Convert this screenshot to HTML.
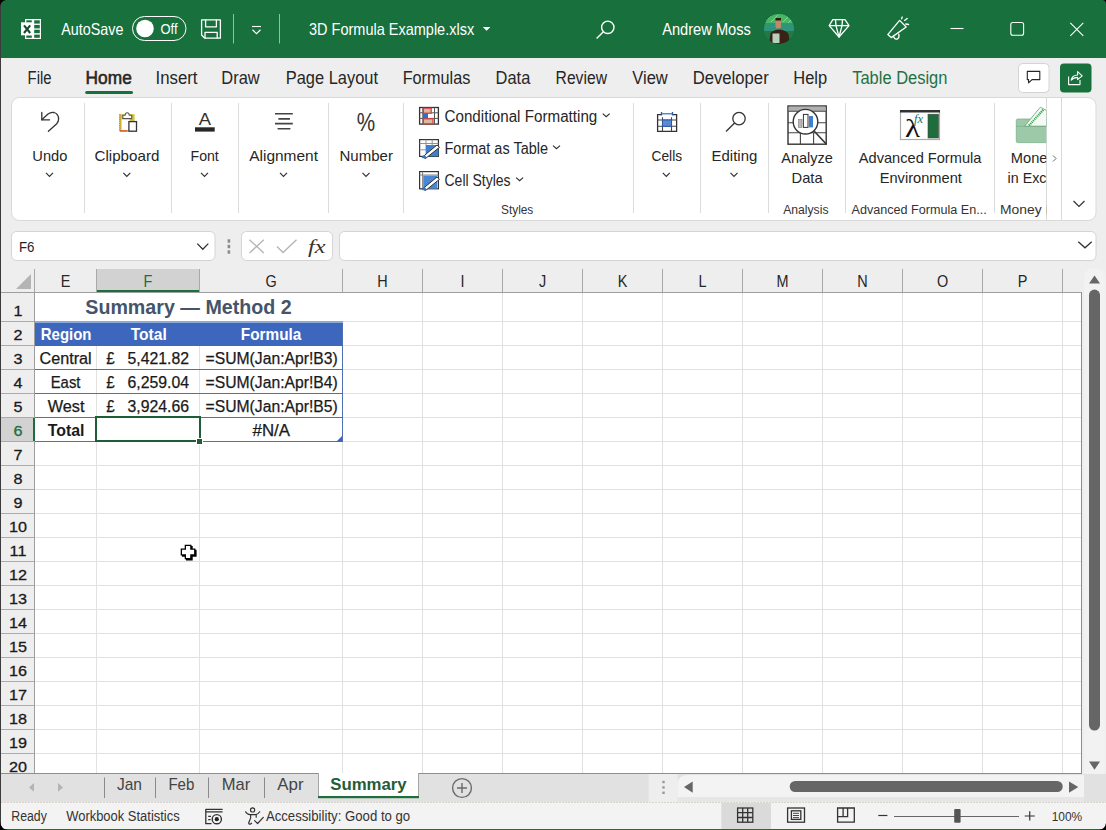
<!DOCTYPE html>
<html><head><meta charset="utf-8"><style>
html,body{margin:0;padding:0;width:1106px;height:830px;overflow:hidden;background:#eeeeee}
svg{display:block;font-family:"Liberation Sans",sans-serif}
</style></head><body>
<svg width="1106" height="830" viewBox="0 0 1106 830">
<rect x="0" y="0" width="1106" height="830" fill="#eeeeee"/>
<rect x="0" y="0" width="1106" height="58" fill="#18703d"/>
<rect x="25" y="19" width="16" height="20" fill="#fff"/>
<rect x="26.3" y="20.3" width="5.5" height="2.7" fill="#18703d"/>
<rect x="34.2" y="20.3" width="5.6" height="3.3" fill="#18703d"/>
<rect x="34.2" y="24.9" width="5.6" height="3.5" fill="#18703d"/>
<rect x="34.2" y="29.7" width="5.6" height="3.5" fill="#18703d"/>
<rect x="26.3" y="35.3" width="5.5" height="2.5" fill="#18703d"/>
<rect x="34.2" y="34.6" width="5.6" height="3.2" fill="#18703d"/>
<rect x="21" y="22.3" width="12" height="13" fill="#fff"/>
<path d="M24 25.3 L30.2 33 M30.2 25.3 L24 33" stroke="#1a4a30" stroke-width="2.1"/>
<text x="61.30" y="35.30" font-size="16.28" fill="#ffffff" textLength="62.11" lengthAdjust="spacingAndGlyphs">AutoSave</text>
<rect x="132.5" y="16.5" width="53.5" height="24" rx="12" fill="none" stroke="#fff" stroke-width="1"/>
<circle cx="145" cy="28.5" r="8.8" fill="#fff"/>
<text x="160.60" y="33.60" font-size="14.24" fill="#ffffff" textLength="16.97" lengthAdjust="spacingAndGlyphs">Off</text>
<g fill="none" stroke="#fff" stroke-width="1.3" stroke-linejoin="round"><path d="M201.6 19.8 H220.4 V38.2 H204.8 L201.6 35 Z"/><path d="M205.6 19.8 V26.8 H216.4 V19.8"/><path d="M205 38.2 V32.4 H217.2 V38.2"/></g>
<path d="M233.5 14 V43.5 M279.5 14 V43.5" stroke="#fff" stroke-opacity="0.55" stroke-width="1"/>
<path d="M252 26.5 H261" stroke="#fff" stroke-width="1.1"/><path d="M252.5 29.8 L256.5 33.6 L260.5 29.8" fill="none" stroke="#fff" stroke-width="1.2"/>
<text x="309.00" y="35.30" font-size="16.28" fill="#ffffff" textLength="165.20" lengthAdjust="spacingAndGlyphs">3D Formula Example.xlsx</text>
<path d="M482.8 27 H490.4 L486.6 30.8 Z" fill="#fff"/>
<g fill="none" stroke="#fff" stroke-width="1.4"><circle cx="607.8" cy="27.3" r="6.2"/><path d="M603.4 31.8 L596.6 38.4"/></g>
<text x="662.20" y="35.30" font-size="16.28" fill="#ffffff" textLength="88.69" lengthAdjust="spacingAndGlyphs">Andrew Moss</text>
<defs><clipPath id="av"><circle cx="779" cy="29" r="15"/></clipPath></defs>
<g clip-path="url(#av)"><rect x="764" y="14" width="30" height="30" fill="#1f7a45"/><rect x="764" y="14" width="30" height="9" fill="#45b865"/><path d="M766 21 L772 15 M771 22 L778 15 M783 22 L789 16 M788 23 L794 17" stroke="#7fd890" stroke-width="1"/><rect x="764" y="23" width="30" height="8" fill="#2f957a"/><path d="M769 44 L770.5 33 Q774 29.5 779.5 29.5 Q786 30 788.5 34 L790 44Z" fill="#3a2216"/><rect x="775.5" y="18.5" width="5.5" height="10" rx="2" fill="#c08a6a"/><rect x="775.5" y="18" width="5.5" height="2.5" fill="#2a1a10"/><rect x="772.5" y="33.5" width="7" height="9.5" fill="#b8d0bc"/></g>
<g fill="none" stroke="#fff" stroke-width="1.3" stroke-linejoin="round"><path d="M832.8 19.6 H845 L849 25.6 L839 37 L829.2 25.6 Z"/><path d="M829.2 25.6 H849 M835.5 19.6 L836 25.6 L839 37 L842 25.6 L842.5 19.6"/></g>
<g fill="none" stroke="#fff" stroke-width="1.3" stroke-linejoin="round" stroke-linecap="round"><path d="M887.8 34.6 L899.6 20.4 L906.2 27 L891.2 37.6 Z"/><path d="M893.6 36.6 Q894.5 39.8 897.5 39 Q899.6 37.8 898.8 34.2"/><path d="M901.6 18.8 L902.2 17 M904.6 20.4 L907.2 18.4 M905.8 24 L908.6 24.5"/></g>
<path d="M950.5 28.5 H963.5" stroke="#fff" stroke-width="1.1"/>
<rect x="1010.8" y="22.5" width="12.8" height="12.8" rx="2" fill="none" stroke="#fff" stroke-width="1.1"/>
<path d="M1070.3 22.8 L1083.3 35.8 M1083.3 22.8 L1070.3 35.8" stroke="#fff" stroke-width="1.1"/>
<text x="27.60" y="83.70" font-size="17.44" fill="#262626" textLength="23.91" lengthAdjust="spacingAndGlyphs">File</text>
<text x="85.60" y="83.70" font-size="17.44" fill="#262626" stroke="#262626" stroke-width="0.55" textLength="46.19" lengthAdjust="spacingAndGlyphs">Home</text>
<text x="155.50" y="83.70" font-size="17.44" fill="#262626" textLength="42.00" lengthAdjust="spacingAndGlyphs">Insert</text>
<text x="221.30" y="83.70" font-size="17.44" fill="#262626" textLength="38.36" lengthAdjust="spacingAndGlyphs">Draw</text>
<text x="285.70" y="83.70" font-size="17.44" fill="#262626" textLength="92.30" lengthAdjust="spacingAndGlyphs">Page Layout</text>
<text x="402.70" y="83.70" font-size="17.44" fill="#262626" textLength="67.59" lengthAdjust="spacingAndGlyphs">Formulas</text>
<text x="495.60" y="83.70" font-size="17.44" fill="#262626" textLength="34.69" lengthAdjust="spacingAndGlyphs">Data</text>
<text x="555.60" y="83.70" font-size="17.44" fill="#262626" textLength="51.35" lengthAdjust="spacingAndGlyphs">Review</text>
<text x="632.30" y="83.70" font-size="17.44" fill="#262626" textLength="35.46" lengthAdjust="spacingAndGlyphs">View</text>
<text x="692.70" y="83.70" font-size="17.44" fill="#262626" textLength="76.00" lengthAdjust="spacingAndGlyphs">Developer</text>
<text x="793.30" y="83.70" font-size="17.44" fill="#262626" textLength="33.89" lengthAdjust="spacingAndGlyphs">Help</text>
<text x="852.20" y="83.70" font-size="17.44" fill="#1e7145" textLength="95.20" lengthAdjust="spacingAndGlyphs">Table Design</text>
<rect x="85.2" y="91" width="47.8" height="3" rx="1.5" fill="#18703d"/>
<rect x="1018.5" y="63.5" width="30.5" height="29" rx="4" fill="#fff" stroke="#d4d4d4"/>
<path d="M1027.3 71.4 H1039.8 V79.6 H1032 L1028.6 82.8 V79.6 H1027.3 Z" fill="none" stroke="#242424" stroke-width="1.1" stroke-linejoin="round"/>
<rect x="1060" y="63.5" width="31.5" height="29" rx="4" fill="#18703d"/>
<g fill="none" stroke="#fff" stroke-width="1.1" stroke-linejoin="round"><path d="M1068.6 76.5 V84.6 H1080 V80"/><path d="M1071.2 80.2 Q1072 75.2 1077.6 75 V71.6 L1082.2 75.8 L1077.6 79.6 V77.4 Q1073.4 77.4 1071.2 80.2Z"/></g>
<rect x="11.5" y="97.5" width="1084.5" height="123" rx="8" fill="#fff" stroke="#d9d9d9"/>
<path d="M84.5 103 V213" stroke="#dcdcdc"/>
<path d="M171.5 103 V213" stroke="#dcdcdc"/>
<path d="M238.5 103 V213" stroke="#dcdcdc"/>
<path d="M328.5 103 V213" stroke="#dcdcdc"/>
<path d="M403.5 103 V213" stroke="#dcdcdc"/>
<path d="M633.5 103 V213" stroke="#dcdcdc"/>
<path d="M700.5 103 V213" stroke="#dcdcdc"/>
<path d="M768.5 103 V213" stroke="#dcdcdc"/>
<path d="M845.5 103 V213" stroke="#dcdcdc"/>
<path d="M994.5 103 V213" stroke="#dcdcdc"/>
<path d="M1046.5 97.5 V220.5 M1061.5 97.5 V220.5" stroke="#d9d9d9"/>
<path d="M1053 155.5 L1056 158.5 L1053 161.5" fill="none" stroke="#666" stroke-width="1"/>
<path d="M1073.5 201 L1079 206.5 L1084.5 201" fill="none" stroke="#333" stroke-width="1.2"/>
<text x="32.30" y="161.00" font-size="15.41" fill="#262626" textLength="35.09" lengthAdjust="spacingAndGlyphs">Undo</text>
<text x="94.50" y="161.00" font-size="15.41" fill="#262626" textLength="64.90" lengthAdjust="spacingAndGlyphs">Clipboard</text>
<text x="190.50" y="161.00" font-size="15.41" fill="#262626" textLength="28.30" lengthAdjust="spacingAndGlyphs">Font</text>
<text x="249.20" y="161.00" font-size="15.41" fill="#262626" textLength="68.80" lengthAdjust="spacingAndGlyphs">Alignment</text>
<text x="339.50" y="161.00" font-size="15.41" fill="#262626" textLength="53.40" lengthAdjust="spacingAndGlyphs">Number</text>
<text x="651.50" y="161.00" font-size="15.41" fill="#262626" textLength="30.60" lengthAdjust="spacingAndGlyphs">Cells</text>
<text x="711.60" y="161.00" font-size="15.41" fill="#262626" textLength="45.69" lengthAdjust="spacingAndGlyphs">Editing</text>
<path d="M46.0 172.8 L49.5 176.4 L53.0 172.8" fill="none" stroke="#333" stroke-width="1.2"/>
<path d="M123.3 172.8 L126.8 176.4 L130.3 172.8" fill="none" stroke="#333" stroke-width="1.2"/>
<path d="M201.0 172.8 L204.5 176.4 L208.0 172.8" fill="none" stroke="#333" stroke-width="1.2"/>
<path d="M280.0 172.8 L283.5 176.4 L287.0 172.8" fill="none" stroke="#333" stroke-width="1.2"/>
<path d="M362.5 172.8 L366 176.4 L369.5 172.8" fill="none" stroke="#333" stroke-width="1.2"/>
<path d="M662.8 172.8 L666.3 176.4 L669.8 172.8" fill="none" stroke="#333" stroke-width="1.2"/>
<path d="M730.5 172.8 L734 176.4 L737.5 172.8" fill="none" stroke="#333" stroke-width="1.2"/>
<text x="781.20" y="162.70" font-size="15.41" fill="#262626" textLength="51.69" lengthAdjust="spacingAndGlyphs">Analyze</text>
<text x="791.50" y="182.60" font-size="15.41" fill="#262626" textLength="31.09" lengthAdjust="spacingAndGlyphs">Data</text>
<text x="858.80" y="163.00" font-size="15.41" fill="#262626" textLength="122.59" lengthAdjust="spacingAndGlyphs">Advanced Formula</text>
<text x="879.70" y="183.00" font-size="15.41" fill="#262626" textLength="82.20" lengthAdjust="spacingAndGlyphs">Environment</text>
<defs><clipPath id="mc"><rect x="995" y="97" width="51.3" height="124"/></clipPath></defs>
<g clip-path="url(#mc)">
<text x="1010.80" y="163.00" font-size="15.41" fill="#262626" textLength="44.01" lengthAdjust="spacingAndGlyphs">Money</text>
<text x="1007.60" y="183.00" font-size="15.41" fill="#262626" textLength="50.01" lengthAdjust="spacingAndGlyphs">in Excel</text>
<text x="1000.00" y="214.00" font-size="13.08" fill="#333" textLength="94.00" lengthAdjust="spacingAndGlyphs">Money in Excel</text>
<rect x="1016.3" y="119" width="32" height="23.6" rx="1.5" fill="#9ccaa8" stroke="#7fae8a" stroke-width="0.8"/>
<path d="M1024.5 126.3 L1040.3 107.2 L1046.5 110.5 L1046.5 126.3Z" fill="#f4faf4" stroke="#6a9a76" stroke-width="0.8"/>
<path d="M1029 125.5 L1043.5 109.5" stroke="#2ea84a" stroke-width="2.2" stroke-dasharray="1.2 0.8"/>
<path d="M1016.3 126.3 H1048" stroke="#7fae8a" stroke-width="0.8"/>
</g>
<text x="501.00" y="214.00" font-size="13.08" fill="#333" textLength="32.30" lengthAdjust="spacingAndGlyphs">Styles</text>
<text x="783.20" y="214.00" font-size="13.08" fill="#333" textLength="45.30" lengthAdjust="spacingAndGlyphs">Analysis</text>
<text x="851.50" y="214.00" font-size="13.08" fill="#333" textLength="135.19" lengthAdjust="spacingAndGlyphs">Advanced Formula En...</text>
<text x="444.50" y="121.80" font-size="15.84" fill="#262626" textLength="152.79" lengthAdjust="spacingAndGlyphs">Conditional Formatting</text>
<text x="444.50" y="153.60" font-size="15.84" fill="#262626" textLength="103.51" lengthAdjust="spacingAndGlyphs">Format as Table</text>
<text x="444.50" y="185.70" font-size="15.84" fill="#262626" textLength="66.10" lengthAdjust="spacingAndGlyphs">Cell Styles</text>
<path d="M602.7 113.6 L606.2 116.8 L609.7 113.6" fill="none" stroke="#333" stroke-width="1.2"/>
<path d="M553.0 145.6 L556.5 148.79999999999998 L560.0 145.6" fill="none" stroke="#333" stroke-width="1.2"/>
<path d="M516.1 177.6 L519.6 180.79999999999998 L523.1 177.6" fill="none" stroke="#333" stroke-width="1.2"/>
<g fill="none" stroke="#333" stroke-width="1.3" stroke-linejoin="round" stroke-linecap="round"><path d="M41.8 112.4 V119.8 H49.6"/><path d="M41.8 119.8 L48 114 Q51 111.8 54 112.5 Q58.6 114 58.6 119 Q58.6 122 56.5 124 L48.4 131.2"/></g>
<rect x="119.3" y="114.2" width="15.3" height="17.3" fill="#d6c43a"/>
<rect x="121.6" y="118.8" width="8" height="11.2" fill="#fff"/>
<path d="M119.9 114.2 V131.5" stroke="#c84a3a" stroke-width="1" stroke-dasharray="1.2 1"/>
<path d="M120 131 H127.5" stroke="#d83a3a" stroke-width="1.2"/>
<path d="M122.8 118.6 V115.3 H125 Q125.4 112.7 127.2 112.7 Q129 112.7 129.4 115.3 H131.7 V118.6 Z" fill="#fff" stroke="#555" stroke-width="1.1"/>
<rect x="128.9" y="121.6" width="7.6" height="9.6" fill="#fff" stroke="#333" stroke-width="1.3"/>
<text x="198.80" y="125.00" font-size="16.72" fill="#333" textLength="12.30" lengthAdjust="spacingAndGlyphs">A</text>
<rect x="195" y="127.3" width="19.7" height="4.3" fill="#262626"/>
<g stroke="#444" stroke-width="1.6"><path d="M275 113.8 H292.8 M278.4 118.9 H290 M275 123.6 H292.8 M277.6 128.7 H290.4"/></g>
<text x="356.80" y="131.00" font-size="25.44" fill="#333" textLength="18.40" lengthAdjust="spacingAndGlyphs">%</text>
<rect x="419.6" y="107.5" width="18.8" height="16.6" fill="#fff" stroke="#333" stroke-width="1.3"/>
<path d="M422.8 107.5 V124 M434.5 107.5 V124 M419.6 112.8 H438.4 M419.6 118.4 H438.4" stroke="#555" stroke-width="1"/>
<rect x="423.4" y="108.2" width="7.8" height="5" fill="#d8b8a0" stroke="#d83a40" stroke-width="1.2"/>
<rect x="423" y="113.3" width="5" height="4.8" fill="#2f6fc8"/>
<rect x="423.4" y="118.8" width="9.6" height="5" fill="#d8b8a0" stroke="#d83a40" stroke-width="1.2"/>
<rect x="419.6" y="139.6" width="18.8" height="16.8" fill="#fff" stroke="#333" stroke-width="1.2"/>
<path d="M426 139.6 V156.4 M432.2 139.6 V145 M419.6 143.5 H438.4 M419.6 149.8 H426" stroke="#888" stroke-width="0.9"/>
<path d="M426 145 H438.4 V156.4 H426Z" fill="#3f7fd0"/>
<path d="M422.5 157 L437 145 L439.5 147.3 L425.5 158.5Z" fill="#fff" stroke="#333" stroke-width="1"/>
<path d="M421.5 157.8 Q423 155 425 155.5 L427 157.5 Q425 159 421.5 157.8Z" fill="#2a7bd0"/>
<rect x="419.6" y="171.6" width="18.8" height="17.2" fill="#fff" stroke="#333" stroke-width="1.2"/>
<path d="M419.6 175 H438.4 M422.6 171.6 V188.8" stroke="#777" stroke-width="0.9"/>
<rect x="423.2" y="175.6" width="14" height="13" fill="#4a88d6"/>
<path d="M422.5 189 L437 177 L439.5 179.3 L425.5 190.5Z" fill="#fff" stroke="#333" stroke-width="1"/>
<path d="M421.5 189.8 Q423 187 425 187.5 L427 189.5 Q425 191 421.5 189.8Z" fill="#2a7bd0"/>
<path d="M661 114.6 H657.6 V131.3 H676.6 V114.6 H673" fill="#fff" stroke="#333" stroke-width="1.3"/>
<path d="M662.5 117.3 V131.3 M671.5 117.3 V131.3 M657.6 120 H676.6 M657.6 126.3 H676.6" stroke="#444" stroke-width="1.1"/>
<rect x="662.5" y="120" width="9" height="6.3" fill="#5a8ad6" stroke="#2a5aa8" stroke-width="1"/>
<path d="M661.5 113.8 H672.5" stroke="#2a70c8" stroke-width="1.2"/><path d="M661.5 112 V115.6 M672.5 112 V115.6" stroke="#2a5aa8" stroke-width="1.3"/>
<g fill="none" stroke="#333" stroke-width="1.3"><circle cx="739" cy="118.6" r="6.2"/><path d="M734.6 123 L726 131.5"/></g>
<rect x="788" y="106" width="38.2" height="38.2" fill="#fff" stroke="#333" stroke-width="1.4"/>
<rect x="788.7" y="106.7" width="36.8" height="4.4" fill="#b0b0b0"/>
<path d="M788 111.2 H826 M788 122.8 H826 M788 132.8 H826 M800.4 132.8 V144 M813.6 132.8 V144" stroke="#444" stroke-width="1.1"/>
<circle cx="805.5" cy="121.7" r="12.3" fill="#fff" stroke="#333" stroke-width="1.4"/>
<rect x="798.6" y="119.6" width="3.4" height="7.8" fill="#b8b8b8" stroke="#777" stroke-width="0.6"/><rect x="803.4" y="114.4" width="4.6" height="13" fill="#fff" stroke="#333" stroke-width="1"/><rect x="809" y="116" width="4" height="11.4" fill="#3f7fd0"/>
<path d="M814.3 131.3 L826.4 144.2" stroke="#333" stroke-width="1.6"/>
<rect x="900.5" y="111" width="39" height="28.5" fill="#fff" stroke="#aaa" stroke-width="1.2"/>
<rect x="900" y="110" width="40" height="2.5" fill="#333"/>
<rect x="928" y="114.2" width="10.5" height="23.8" fill="#1e6e3c" stroke="#444" stroke-width="0.6"/>
<text x="905" y="136.9" font-family="Liberation Serif" font-size="25" fill="#111" textLength="15.1" lengthAdjust="spacingAndGlyphs">λ</text>
<text x="914" y="123.2" font-family="Liberation Serif" font-style="italic" font-size="11.6" fill="#2e6e5a" textLength="9.2" lengthAdjust="spacingAndGlyphs">fx</text>
<rect x="11.5" y="231.5" width="203.5" height="29" rx="5" fill="#fff" stroke="#d4d4d4"/>
<text x="19.00" y="251.60" font-size="15.41" fill="#262626" textLength="15.50" lengthAdjust="spacingAndGlyphs">F6</text>
<path d="M197.3 243.6 L202.8 249.2 L208.3 243.6" fill="none" stroke="#333" stroke-width="1.3"/>
<rect x="227.6" y="239.3" width="2.6" height="3.4" fill="#8a8a8a"/>
<rect x="227.6" y="244.8" width="2.6" height="3.4" fill="#8a8a8a"/>
<rect x="227.6" y="250.3" width="2.6" height="3.4" fill="#8a8a8a"/>
<rect x="241.5" y="231.5" width="91" height="29" rx="5" fill="#fff" stroke="#d4d4d4"/>
<path d="M249.5 239.8 L263.8 253 M263.8 239.8 L249.5 253" stroke="#b4b4b4" stroke-width="1.3"/>
<path d="M277 246.5 L283 252.5 L296.5 239.8" fill="none" stroke="#b4b4b4" stroke-width="1.3"/>
<text x="308" y="252.5" font-family="Liberation Serif" font-style="italic" font-size="19" fill="#333" textLength="17.5" lengthAdjust="spacingAndGlyphs">fx</text>
<rect x="339.5" y="231.5" width="756.5" height="29" rx="5" fill="#fff" stroke="#d4d4d4"/>
<path d="M1078.3 241.8 L1085 247.8 L1091.7 241.8" fill="none" stroke="#333" stroke-width="1.3"/>
<rect x="1" y="269" width="1081" height="23" fill="#eeeeee"/>
<rect x="1" y="293" width="34" height="480" fill="#eeeeee"/>
<rect x="35" y="293" width="1047" height="480" fill="#fff"/>
<rect x="97" y="269" width="102" height="23" fill="#d2d2d2"/>
<rect x="97" y="290" width="102" height="2" fill="#1e6e3c"/>
<rect x="1" y="418" width="33" height="23" fill="#d2d2d2"/>
<path d="M31 274 V289 H16 Z" fill="#b4b4b4"/>
<path d="M35 345.5 H1082" stroke="#e1e1e1"/>
<path d="M35 369.5 H1082" stroke="#e1e1e1"/>
<path d="M35 393.5 H1082" stroke="#e1e1e1"/>
<path d="M35 417.5 H1082" stroke="#e1e1e1"/>
<path d="M35 441.5 H1082" stroke="#e1e1e1"/>
<path d="M35 465.5 H1082" stroke="#e1e1e1"/>
<path d="M35 489.5 H1082" stroke="#e1e1e1"/>
<path d="M35 513.5 H1082" stroke="#e1e1e1"/>
<path d="M35 537.5 H1082" stroke="#e1e1e1"/>
<path d="M35 561.5 H1082" stroke="#e1e1e1"/>
<path d="M35 585.5 H1082" stroke="#e1e1e1"/>
<path d="M35 609.5 H1082" stroke="#e1e1e1"/>
<path d="M35 633.5 H1082" stroke="#e1e1e1"/>
<path d="M35 657.5 H1082" stroke="#e1e1e1"/>
<path d="M35 681.5 H1082" stroke="#e1e1e1"/>
<path d="M35 705.5 H1082" stroke="#e1e1e1"/>
<path d="M35 729.5 H1082" stroke="#e1e1e1"/>
<path d="M35 753.5 H1082" stroke="#e1e1e1"/>
<path d="M35 321.5 H1082" stroke="#e1e1e1"/>
<path d="M96.5 322 V773" stroke="#e1e1e1"/>
<path d="M199.5 322 V773" stroke="#e1e1e1"/>
<path d="M342.5 322 V773" stroke="#e1e1e1"/>
<path d="M422.5 293 V773" stroke="#e1e1e1"/>
<path d="M502.5 293 V773" stroke="#e1e1e1"/>
<path d="M582.5 293 V773" stroke="#e1e1e1"/>
<path d="M662.5 293 V773" stroke="#e1e1e1"/>
<path d="M742.5 293 V773" stroke="#e1e1e1"/>
<path d="M822.5 293 V773" stroke="#e1e1e1"/>
<path d="M902.5 293 V773" stroke="#e1e1e1"/>
<path d="M982.5 293 V773" stroke="#e1e1e1"/>
<path d="M1062.5 293 V773" stroke="#e1e1e1"/>
<path d="M1 321.5 H34" stroke="#ababab"/>
<path d="M1 345.5 H34" stroke="#ababab"/>
<path d="M1 369.5 H34" stroke="#ababab"/>
<path d="M1 393.5 H34" stroke="#ababab"/>
<path d="M1 417.5 H34" stroke="#ababab"/>
<path d="M1 441.5 H34" stroke="#ababab"/>
<path d="M1 465.5 H34" stroke="#ababab"/>
<path d="M1 489.5 H34" stroke="#ababab"/>
<path d="M1 513.5 H34" stroke="#ababab"/>
<path d="M1 537.5 H34" stroke="#ababab"/>
<path d="M1 561.5 H34" stroke="#ababab"/>
<path d="M1 585.5 H34" stroke="#ababab"/>
<path d="M1 609.5 H34" stroke="#ababab"/>
<path d="M1 633.5 H34" stroke="#ababab"/>
<path d="M1 657.5 H34" stroke="#ababab"/>
<path d="M1 681.5 H34" stroke="#ababab"/>
<path d="M1 705.5 H34" stroke="#ababab"/>
<path d="M1 729.5 H34" stroke="#ababab"/>
<path d="M1 753.5 H34" stroke="#ababab"/>
<path d="M34.5 269 V292" stroke="#a8a8a8"/>
<path d="M96.5 269 V292" stroke="#a8a8a8"/>
<path d="M199.5 269 V292" stroke="#a8a8a8"/>
<path d="M342.5 269 V292" stroke="#a8a8a8"/>
<path d="M422.5 269 V292" stroke="#a8a8a8"/>
<path d="M502.5 269 V292" stroke="#a8a8a8"/>
<path d="M582.5 269 V292" stroke="#a8a8a8"/>
<path d="M662.5 269 V292" stroke="#a8a8a8"/>
<path d="M742.5 269 V292" stroke="#a8a8a8"/>
<path d="M822.5 269 V292" stroke="#a8a8a8"/>
<path d="M902.5 269 V292" stroke="#a8a8a8"/>
<path d="M982.5 269 V292" stroke="#a8a8a8"/>
<path d="M1062.5 269 V292" stroke="#a8a8a8"/>
<path d="M1 292.5 H1082" stroke="#9e9e9e"/>
<path d="M34.5 292 V773" stroke="#9e9e9e"/>
<rect x="33" y="418" width="2" height="23" fill="#1e6e3c"/>
<path d="M1081.5 292 V773.5 M1 773.5 H1082" stroke="#8e8e8e"/>
<text x="60.68" y="286.80" font-size="15.70" fill="#262626" textLength="9.63" lengthAdjust="spacingAndGlyphs">E</text>
<text x="143.59" y="286.80" font-size="15.70" fill="#1e6e3c" textLength="8.82" lengthAdjust="spacingAndGlyphs">F</text>
<text x="265.38" y="286.80" font-size="15.70" fill="#262626" textLength="11.23" lengthAdjust="spacingAndGlyphs">G</text>
<text x="377.29" y="286.80" font-size="15.70" fill="#262626" textLength="10.43" lengthAdjust="spacingAndGlyphs">H</text>
<text x="460.49" y="286.80" font-size="15.70" fill="#262626" textLength="4.01" lengthAdjust="spacingAndGlyphs">I</text>
<text x="538.89" y="286.80" font-size="15.70" fill="#262626" textLength="7.22" lengthAdjust="spacingAndGlyphs">J</text>
<text x="617.68" y="286.80" font-size="15.70" fill="#262626" textLength="9.63" lengthAdjust="spacingAndGlyphs">K</text>
<text x="698.49" y="286.80" font-size="15.70" fill="#262626" textLength="8.03" lengthAdjust="spacingAndGlyphs">L</text>
<text x="776.48" y="286.80" font-size="15.70" fill="#262626" textLength="12.03" lengthAdjust="spacingAndGlyphs">M</text>
<text x="857.29" y="286.80" font-size="15.70" fill="#262626" textLength="10.43" lengthAdjust="spacingAndGlyphs">N</text>
<text x="936.88" y="286.80" font-size="15.70" fill="#262626" textLength="11.23" lengthAdjust="spacingAndGlyphs">O</text>
<text x="1017.68" y="286.80" font-size="15.70" fill="#262626" textLength="9.63" lengthAdjust="spacingAndGlyphs">P</text>
<text x="13.50" y="316.00" font-size="15.41" fill="#1a1a1a" stroke="#1a1a1a" stroke-width="0.3" textLength="9.00" lengthAdjust="spacingAndGlyphs">1</text>
<text x="13.50" y="340.00" font-size="15.41" fill="#1a1a1a" stroke="#1a1a1a" stroke-width="0.3" textLength="9.00" lengthAdjust="spacingAndGlyphs">2</text>
<text x="13.50" y="364.00" font-size="15.41" fill="#1a1a1a" stroke="#1a1a1a" stroke-width="0.3" textLength="9.00" lengthAdjust="spacingAndGlyphs">3</text>
<text x="13.50" y="388.00" font-size="15.41" fill="#1a1a1a" stroke="#1a1a1a" stroke-width="0.3" textLength="9.00" lengthAdjust="spacingAndGlyphs">4</text>
<text x="13.50" y="412.00" font-size="15.41" fill="#1a1a1a" stroke="#1a1a1a" stroke-width="0.3" textLength="9.00" lengthAdjust="spacingAndGlyphs">5</text>
<text x="13.50" y="436.00" font-size="15.41" fill="#1e6e3c" stroke="#1e6e3c" stroke-width="0.3" textLength="9.00" lengthAdjust="spacingAndGlyphs">6</text>
<text x="13.50" y="460.00" font-size="15.41" fill="#1a1a1a" stroke="#1a1a1a" stroke-width="0.3" textLength="9.00" lengthAdjust="spacingAndGlyphs">7</text>
<text x="13.50" y="484.00" font-size="15.41" fill="#1a1a1a" stroke="#1a1a1a" stroke-width="0.3" textLength="9.00" lengthAdjust="spacingAndGlyphs">8</text>
<text x="13.50" y="508.00" font-size="15.41" fill="#1a1a1a" stroke="#1a1a1a" stroke-width="0.3" textLength="9.00" lengthAdjust="spacingAndGlyphs">9</text>
<text x="9.01" y="532.00" font-size="15.41" fill="#1a1a1a" stroke="#1a1a1a" stroke-width="0.3" textLength="17.99" lengthAdjust="spacingAndGlyphs">10</text>
<text x="9.60" y="556.00" font-size="15.41" fill="#1a1a1a" stroke="#1a1a1a" stroke-width="0.3" textLength="16.79" lengthAdjust="spacingAndGlyphs">11</text>
<text x="9.01" y="580.00" font-size="15.41" fill="#1a1a1a" stroke="#1a1a1a" stroke-width="0.3" textLength="17.99" lengthAdjust="spacingAndGlyphs">12</text>
<text x="9.01" y="604.00" font-size="15.41" fill="#1a1a1a" stroke="#1a1a1a" stroke-width="0.3" textLength="17.99" lengthAdjust="spacingAndGlyphs">13</text>
<text x="9.01" y="628.00" font-size="15.41" fill="#1a1a1a" stroke="#1a1a1a" stroke-width="0.3" textLength="17.99" lengthAdjust="spacingAndGlyphs">14</text>
<text x="9.01" y="652.00" font-size="15.41" fill="#1a1a1a" stroke="#1a1a1a" stroke-width="0.3" textLength="17.99" lengthAdjust="spacingAndGlyphs">15</text>
<text x="9.01" y="676.00" font-size="15.41" fill="#1a1a1a" stroke="#1a1a1a" stroke-width="0.3" textLength="17.99" lengthAdjust="spacingAndGlyphs">16</text>
<text x="9.01" y="700.00" font-size="15.41" fill="#1a1a1a" stroke="#1a1a1a" stroke-width="0.3" textLength="17.99" lengthAdjust="spacingAndGlyphs">17</text>
<text x="9.01" y="724.00" font-size="15.41" fill="#1a1a1a" stroke="#1a1a1a" stroke-width="0.3" textLength="17.99" lengthAdjust="spacingAndGlyphs">18</text>
<text x="9.01" y="748.00" font-size="15.41" fill="#1a1a1a" stroke="#1a1a1a" stroke-width="0.3" textLength="17.99" lengthAdjust="spacingAndGlyphs">19</text>
<text x="9.01" y="772.00" font-size="15.41" fill="#1a1a1a" stroke="#1a1a1a" stroke-width="0.3" textLength="17.99" lengthAdjust="spacingAndGlyphs">20</text>
<text x="85.30" y="313.80" font-size="19.33" fill="#44546a" font-weight="bold" textLength="206.30" lengthAdjust="spacingAndGlyphs">Summary — Method 2</text>
<rect x="35" y="321" width="308" height="2" fill="#8eaadb"/>
<rect x="35" y="323" width="308" height="22" fill="#3d67bd"/>
<path d="M35 345.5 H343" stroke="#3d67bd"/>
<text x="40.80" y="339.50" font-size="15.99" fill="#fff" font-weight="bold" textLength="50.70" lengthAdjust="spacingAndGlyphs">Region</text>
<text x="130.70" y="339.50" font-size="15.99" fill="#fff" font-weight="bold" textLength="36.11" lengthAdjust="spacingAndGlyphs">Total</text>
<text x="240.80" y="339.50" font-size="15.99" fill="#fff" font-weight="bold" textLength="60.59" lengthAdjust="spacingAndGlyphs">Formula</text>
<path d="M35 369.5 H343" stroke="#4f6fb3"/>
<path d="M35 393.5 H343" stroke="#4f6fb3"/>
<path d="M35 417.5 H343" stroke="#4f6fb3"/>
<path d="M35 441.5 H343" stroke="#4f6fb3"/>
<path d="M342.5 323 V442" stroke="#4f6fb3"/>
<text x="39.50" y="363.60" font-size="15.84" fill="#1a1a1a" stroke="#1a1a1a" stroke-width="0.25" textLength="52.19" lengthAdjust="spacingAndGlyphs">Central</text>
<text x="106.30" y="363.60" font-size="15.84" fill="#1a1a1a" stroke="#1a1a1a" stroke-width="0.25" textLength="8.50" lengthAdjust="spacingAndGlyphs">£</text>
<text x="127.50" y="363.60" font-size="15.84" fill="#1a1a1a" stroke="#1a1a1a" stroke-width="0.25" textLength="61.49" lengthAdjust="spacingAndGlyphs">5,421.82</text>
<text x="205.60" y="363.60" font-size="15.84" fill="#1a1a1a" stroke="#1a1a1a" stroke-width="0.25" textLength="132.09" lengthAdjust="spacingAndGlyphs">=SUM(Jan:Apr!B3)</text>
<text x="50.70" y="387.60" font-size="15.84" fill="#1a1a1a" stroke="#1a1a1a" stroke-width="0.25" textLength="29.80" lengthAdjust="spacingAndGlyphs">East</text>
<text x="106.30" y="387.60" font-size="15.84" fill="#1a1a1a" stroke="#1a1a1a" stroke-width="0.25" textLength="8.50" lengthAdjust="spacingAndGlyphs">£</text>
<text x="127.50" y="387.60" font-size="15.84" fill="#1a1a1a" stroke="#1a1a1a" stroke-width="0.25" textLength="61.49" lengthAdjust="spacingAndGlyphs">6,259.04</text>
<text x="205.60" y="387.60" font-size="15.84" fill="#1a1a1a" stroke="#1a1a1a" stroke-width="0.25" textLength="132.09" lengthAdjust="spacingAndGlyphs">=SUM(Jan:Apr!B4)</text>
<text x="47.70" y="411.60" font-size="15.84" fill="#1a1a1a" stroke="#1a1a1a" stroke-width="0.25" textLength="36.80" lengthAdjust="spacingAndGlyphs">West</text>
<text x="106.30" y="411.60" font-size="15.84" fill="#1a1a1a" stroke="#1a1a1a" stroke-width="0.25" textLength="8.50" lengthAdjust="spacingAndGlyphs">£</text>
<text x="127.50" y="411.60" font-size="15.84" fill="#1a1a1a" stroke="#1a1a1a" stroke-width="0.25" textLength="61.49" lengthAdjust="spacingAndGlyphs">3,924.66</text>
<text x="205.60" y="411.60" font-size="15.84" fill="#1a1a1a" stroke="#1a1a1a" stroke-width="0.25" textLength="132.09" lengthAdjust="spacingAndGlyphs">=SUM(Jan:Apr!B5)</text>
<text x="47.70" y="435.70" font-size="15.70" fill="#1a1a1a" font-weight="bold" textLength="36.81" lengthAdjust="spacingAndGlyphs">Total</text>
<text x="252.60" y="435.70" font-size="15.84" fill="#1a1a1a" stroke="#1a1a1a" stroke-width="0.25" textLength="37.40" lengthAdjust="spacingAndGlyphs">#N/A</text>
<path d="M342 436 V442 H336 Z" fill="#3d67bd"/>
<rect x="96" y="417" width="104" height="24" fill="none" stroke="#1e5e36" stroke-width="2"/>
<rect x="196" y="438" width="7" height="7" fill="#fff"/>
<rect x="197" y="439" width="5" height="5" fill="#1e5e36"/>
<path d="M185.89999999999998 545.9000000000001 H192.7 V549.7 H196.6 V556.7 H192.7 V560.5 H185.89999999999998 V556.7 H181.89999999999998 V549.7 H185.89999999999998 Z" fill="#000"/><path d="M184.7 544.7 H191.5 V548.5 H195.4 V555.5 H191.5 V559.3 H184.7 V555.5 H180.7 V548.5 H184.7 Z" fill="#000"/><path d="M186 546 H190.2 V549.8 H194.1 V554.2 H190.2 V558 H186 V554.2 H182 V549.8 H186 Z" fill="#fff"/>
<rect x="1084.3" y="268.5" width="21" height="508" rx="8" fill="#f2f2f2"/>
<path d="M1089 283.5 L1094.5 275.5 L1100 283.5 Z" fill="#666"/>
<rect x="1089" y="289.6" width="11" height="441" rx="5.5" fill="#666"/>
<path d="M1089 761.5 L1094.5 769.7 L1100 761.5 Z" fill="#666"/>
<rect x="1" y="774" width="1105" height="28" fill="#e1e1e1"/>
<rect x="648.6" y="774" width="29" height="28" fill="#eeeeee"/>
<rect x="677.5" y="797" width="406.5" height="5" fill="#e6e6e6"/>
<path d="M34 783 L29 787.4 L34 791.8 Z M58 783 L63 787.4 L58 791.8 Z" fill="#b4b4b4"/>
<path d="M104.5 777.5 V798" stroke="#8a8a8a"/>
<path d="M155.5 777.5 V798" stroke="#8a8a8a"/>
<path d="M208.5 777.5 V798" stroke="#8a8a8a"/>
<path d="M264.5 777.5 V798" stroke="#8a8a8a"/>
<text x="117.00" y="789.90" font-size="15.99" fill="#444" textLength="25.00" lengthAdjust="spacingAndGlyphs">Jan</text>
<text x="168.40" y="789.90" font-size="15.99" fill="#444" textLength="26.00" lengthAdjust="spacingAndGlyphs">Feb</text>
<text x="221.70" y="789.90" font-size="15.99" fill="#444" textLength="28.50" lengthAdjust="spacingAndGlyphs">Mar</text>
<text x="277.30" y="789.90" font-size="15.99" fill="#444" textLength="26.30" lengthAdjust="spacingAndGlyphs">Apr</text>
<rect x="318.5" y="773" width="100" height="25" fill="#fff"/>
<path d="M318.5 773 V798 M418.5 773 V798" stroke="#a6a6a6"/>
<rect x="318" y="796" width="101" height="2.2" fill="#1e6e3c"/>
<text x="330.20" y="790.00" font-size="16.28" fill="#235c38" font-weight="bold" textLength="76.49" lengthAdjust="spacingAndGlyphs">Summary</text>
<circle cx="462" cy="788" r="9.4" fill="none" stroke="#6a6a6a" stroke-width="1.4"/>
<path d="M462 783 V793 M457 788 H467" stroke="#6a6a6a" stroke-width="1.4"/>
<rect x="662.3" y="780.8" width="2.4" height="2.4" fill="#999"/>
<rect x="662.3" y="786.1999999999999" width="2.4" height="2.4" fill="#999"/>
<rect x="662.3" y="791.5999999999999" width="2.4" height="2.4" fill="#999"/>
<path d="M687.5 775 H1084 V797 H677.5 V785 Q677.5 775 687.5 775Z" fill="#f3f3f3"/>
<path d="M692.7 781.4 L684 787.1 L692.7 792.8 Z M1069 781.4 L1078.3 787.1 L1069 792.8 Z" fill="#666"/>
<rect x="789.7" y="781" width="273" height="11" rx="5.5" fill="#666"/>
<rect x="1" y="802" width="1105" height="28" fill="#f3f3f3"/>
<path d="M1 802.5 H1106" stroke="#d8d4cc" stroke-dasharray="2 1"/>
<text x="11.30" y="821.00" font-size="13.81" fill="#333" textLength="35.50" lengthAdjust="spacingAndGlyphs">Ready</text>
<text x="66.20" y="821.00" font-size="13.81" fill="#333" textLength="113.50" lengthAdjust="spacingAndGlyphs">Workbook Statistics</text>
<text x="265.90" y="821.00" font-size="13.81" fill="#333" textLength="144.30" lengthAdjust="spacingAndGlyphs">Accessibility: Good to go</text>
<g fill="none" stroke="#333" stroke-width="1.3"><path d="M205.8 809.4 H222.6 M205.8 811.8 H222.6 M205.8 809 V823.6 H211.5"/><path d="M208.2 816.4 H211 M208.2 819.6 H210.6" stroke-width="1.1"/></g><circle cx="216.8" cy="819.2" r="4.6" fill="#f3f3f3" stroke="#333" stroke-width="1.4"/><circle cx="216.8" cy="819.2" r="2.1" fill="#222"/>
<g fill="none" stroke="#333" stroke-width="1.2" stroke-linecap="round" stroke-linejoin="round"><circle cx="252.6" cy="809.9" r="2.1"/><path d="M245.6 811.8 Q247 814.6 250 814.6 H255.3 Q258 814.6 259.7 811.8"/><path d="M250.6 814.6 Q251.2 818 249.6 820.6 Q248.2 823 249 823.9 Q250.6 824.6 251.6 823.2"/><path d="M256.2 814.6 V817.2"/><path d="M254.6 820.6 L257.6 823.5 L263.3 817.4"/></g>
<rect x="721.4" y="803" width="49.5" height="27" fill="#dadada"/>
<g fill="none" stroke="#333" stroke-width="1.3"><rect x="737.6" y="808" width="15.2" height="14.2"/><path d="M742.7 808 V822.2 M747.7 808 V822.2 M737.6 812.7 H752.8 M737.6 817.5 H752.8"/></g>
<g fill="none" stroke="#333" stroke-width="1.3"><rect x="787.6" y="808" width="16.9" height="14.2"/><rect x="791.4" y="810.8" width="9.4" height="8.6"/><path d="M793 813.3 H799 M793 815.5 H799 M793 817.6 H799" stroke-width="0.9"/></g>
<g fill="none" stroke="#333" stroke-width="1.3"><path d="M837.6 808 H854.3 V822.2 H837.6 Z M837.6 816.6 H847.6 V808 M843.1 808 V816.6"/></g>
<path d="M878.3 815.5 H887.4" stroke="#333" stroke-width="1.2"/>
<path d="M894 816.5 H1019" stroke="#666" stroke-width="1"/>
<rect x="954.2" y="809" width="6.4" height="13.7" rx="1" fill="#555"/>
<path d="M1024.7 816 H1034.8 M1029.75 811.2 V820.6" stroke="#333" stroke-width="1.2"/>
<text x="1051.70" y="820.90" font-size="12.94" fill="#333" textLength="30.50" lengthAdjust="spacingAndGlyphs">100%</text>
<path d="M0.5 0 V830" stroke="#3c3c3c"/>
<path d="M1 829.5 H1106" stroke="#1e6e3c"/>
<path d="M0 0 H6 Q1 1 0 6 Z" fill="#000"/>
<path d="M1106 0 H1103 Q1105.5 0.5 1106 3 Z" fill="#000"/>
<path d="M1106 830 V823 Q1105 829 1099 830 Z" fill="#000"/>
<path d="M0 830 V822 Q1 829 8 830 Z" fill="#000"/>
</svg></body></html>
